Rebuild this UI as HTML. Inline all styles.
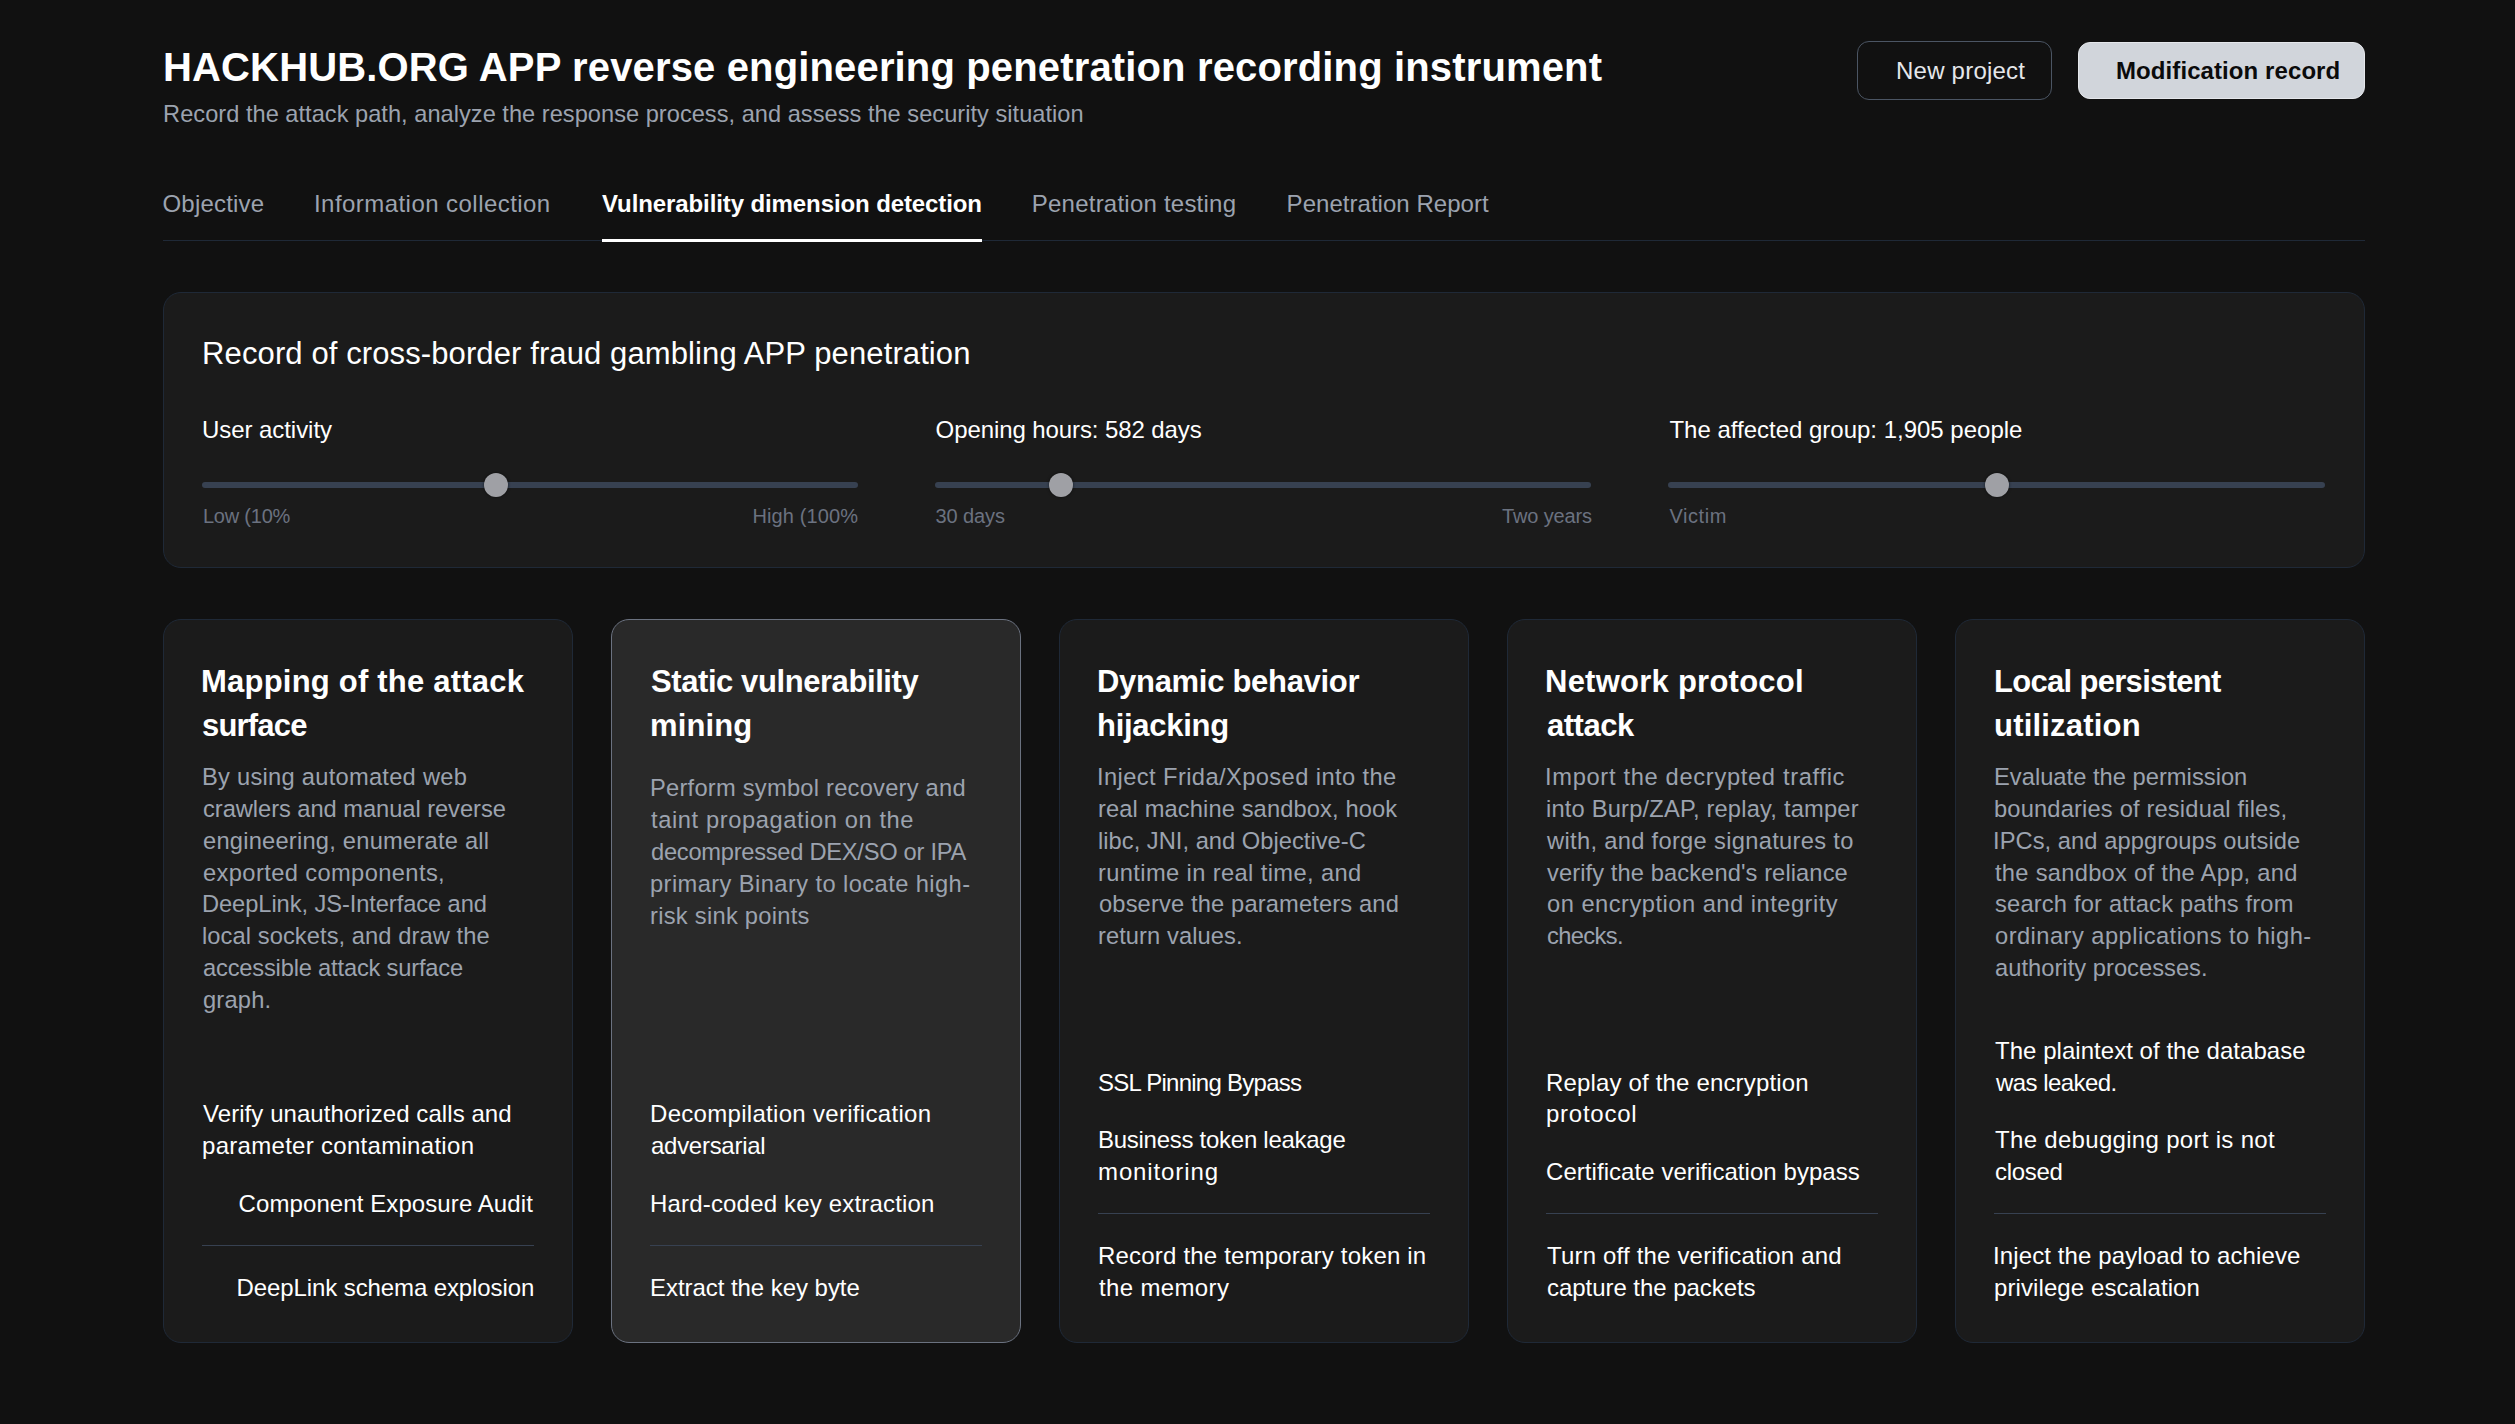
<!DOCTYPE html>
<html><head><meta charset="utf-8"><title>HACKHUB.ORG APP reverse engineering penetration recording instrument</title>
<style>
html,body{margin:0;padding:0;}
body{width:2515px;height:1424px;background:#111111;position:relative;overflow:hidden;font-family:"Liberation Sans",sans-serif;}
.t{position:absolute;white-space:pre;}
.b{position:absolute;}
</style></head><body>
<div class="b" style="left:1857px;top:41px;width:195px;height:59px;border:1px solid #4b5563;border-radius:12px;box-sizing:border-box;"></div>
<div class="b" style="left:2078px;top:42px;width:287px;height:57px;background:#d1d5db;border:1px solid #e5e7eb;border-radius:12px;box-sizing:border-box;"></div>
<div class="b" style="left:163px;top:240px;width:2202px;height:1px;background:#1f2937;"></div>
<div class="b" style="left:602px;top:239px;width:380px;height:3px;background:#fff;"></div>
<div class="b" style="left:163px;top:292px;width:2202px;height:276px;background:#1b1b1b;border:1px solid #1f2937;border-radius:18px;box-sizing:border-box;"></div>
<div class="b" style="left:202px;top:482px;width:656px;height:6px;background:#374151;border-radius:3px;"></div>
<div class="b" style="left:483.9px;top:473px;width:24px;height:24px;border-radius:50%;background:#9fa0a5;box-shadow:0 0 3px rgba(0,0,0,.6);"></div>
<div class="b" style="left:935px;top:482px;width:656px;height:6px;background:#374151;border-radius:3px;"></div>
<div class="b" style="left:1048.9px;top:473px;width:24px;height:24px;border-radius:50%;background:#9fa0a5;box-shadow:0 0 3px rgba(0,0,0,.6);"></div>
<div class="b" style="left:1668px;top:482px;width:657px;height:6px;background:#374151;border-radius:3px;"></div>
<div class="b" style="left:1985.0px;top:473px;width:24px;height:24px;border-radius:50%;background:#9fa0a5;box-shadow:0 0 3px rgba(0,0,0,.6);"></div>
<div class="b" style="left:163px;top:619px;width:410px;height:724px;background:#1b1b1b;border:1px solid #1f2937;border-radius:18px;box-sizing:border-box;"></div>
<div class="b" style="left:202px;top:1245px;width:332px;height:1px;background:#374151;"></div>
<div class="b" style="left:611px;top:619px;width:410px;height:724px;background:#292929;border:1px solid #6b7280;border-radius:18px;box-sizing:border-box;"></div>
<div class="b" style="left:650px;top:1245px;width:332px;height:1px;background:#374151;"></div>
<div class="b" style="left:1059px;top:619px;width:410px;height:724px;background:#1b1b1b;border:1px solid #1f2937;border-radius:18px;box-sizing:border-box;"></div>
<div class="b" style="left:1098px;top:1213px;width:332px;height:1px;background:#374151;"></div>
<div class="b" style="left:1507px;top:619px;width:410px;height:724px;background:#1b1b1b;border:1px solid #1f2937;border-radius:18px;box-sizing:border-box;"></div>
<div class="b" style="left:1546px;top:1213px;width:332px;height:1px;background:#374151;"></div>
<div class="b" style="left:1955px;top:619px;width:410px;height:724px;background:#1b1b1b;border:1px solid #1f2937;border-radius:18px;box-sizing:border-box;"></div>
<div class="b" style="left:1994px;top:1213px;width:332px;height:1px;background:#374151;"></div>
<div class="t" style="left:163.00px;top:42.34px;font-size:40px;line-height:50px;letter-spacing:0.147px;color:#ffffff;font-weight:700;">HACKHUB.ORG APP reverse engineering penetration recording instrument</div>
<div class="t" style="left:163.10px;top:98.72px;font-size:23.6px;line-height:30px;letter-spacing:0.028px;color:#9ca3af;">Record the attack path, analyze the response process, and assess the security situation</div>
<div class="t" style="left:1896.00px;top:56.08px;font-size:24px;line-height:30px;letter-spacing:0.228px;color:#e5e7eb;">New project</div>
<div class="t" style="left:2116.00px;top:56.08px;font-size:24px;line-height:30px;letter-spacing:0.085px;color:#0b0b0b;font-weight:700;">Modification record</div>
<div class="t" style="left:162.50px;top:188.98px;font-size:24px;line-height:30px;letter-spacing:0.196px;color:#9ca3af;">Objective</div>
<div class="t" style="left:314.00px;top:188.98px;font-size:24px;line-height:30px;letter-spacing:0.449px;color:#9ca3af;">Information collection</div>
<div class="t" style="left:602.10px;top:188.98px;font-size:24px;line-height:30px;letter-spacing:-0.102px;color:#ffffff;font-weight:700;">Vulnerability dimension detection</div>
<div class="t" style="left:1031.80px;top:188.98px;font-size:24px;line-height:30px;letter-spacing:0.226px;color:#9ca3af;">Penetration testing</div>
<div class="t" style="left:1286.60px;top:188.98px;font-size:24px;line-height:30px;letter-spacing:0.032px;color:#9ca3af;">Penetration Report</div>
<div class="t" style="left:202.10px;top:333.86px;font-size:31px;line-height:39px;letter-spacing:0.107px;color:#ffffff;">Record of cross-border fraud gambling APP penetration</div>
<div class="t" style="left:201.90px;top:415.48px;font-size:24px;line-height:30px;letter-spacing:-0.048px;color:#ffffff;">User activity</div>
<div class="t" style="left:935.60px;top:415.48px;font-size:24px;line-height:30px;letter-spacing:-0.094px;color:#ffffff;">Opening hours: 582 days</div>
<div class="t" style="left:1669.40px;top:415.48px;font-size:24px;line-height:30px;letter-spacing:-0.005px;color:#ffffff;">The affected group: 1,905 people</div>
<div class="t" style="left:202.90px;top:504.37px;font-size:20px;line-height:25px;letter-spacing:-0.206px;color:#6b7280;">Low (10%</div>
<div class="t" style="left:752.40px;top:504.37px;font-size:20px;line-height:25px;letter-spacing:0.122px;color:#6b7280;">High (100%</div>
<div class="t" style="left:935.60px;top:504.37px;font-size:20px;line-height:25px;letter-spacing:-0.107px;color:#6b7280;">30 days</div>
<div class="t" style="left:1502.10px;top:504.37px;font-size:20px;line-height:25px;letter-spacing:-0.167px;color:#6b7280;">Two years</div>
<div class="t" style="left:1669.40px;top:504.37px;font-size:20px;line-height:25px;letter-spacing:0.564px;color:#6b7280;">Victim</div>
<div class="t" style="left:201.00px;top:662.26px;font-size:31px;line-height:39px;letter-spacing:0.216px;color:#ffffff;font-weight:700;">Mapping of the attack</div>
<div class="t" style="left:202.00px;top:706.26px;font-size:31px;line-height:39px;letter-spacing:-0.800px;color:#ffffff;font-weight:700;">surface</div>
<div class="t" style="left:202.00px;top:761.99px;font-size:23.7px;line-height:30px;letter-spacing:0.260px;color:#9ca3af;">By using automated web</div>
<div class="t" style="left:203.00px;top:793.85px;font-size:23.7px;line-height:30px;letter-spacing:-0.049px;color:#9ca3af;">crawlers and manual reverse</div>
<div class="t" style="left:203.00px;top:825.71px;font-size:23.7px;line-height:30px;letter-spacing:0.223px;color:#9ca3af;">engineering, enumerate all</div>
<div class="t" style="left:203.00px;top:857.57px;font-size:23.7px;line-height:30px;letter-spacing:0.384px;color:#9ca3af;">exported components,</div>
<div class="t" style="left:202.00px;top:889.43px;font-size:23.7px;line-height:30px;letter-spacing:-0.084px;color:#9ca3af;">DeepLink, JS-Interface and</div>
<div class="t" style="left:202.00px;top:921.29px;font-size:23.7px;line-height:30px;letter-spacing:0.074px;color:#9ca3af;">local sockets, and draw the</div>
<div class="t" style="left:203.00px;top:953.15px;font-size:23.7px;line-height:30px;letter-spacing:-0.187px;color:#9ca3af;">accessible attack surface</div>
<div class="t" style="left:203.00px;top:985.01px;font-size:23.7px;line-height:30px;letter-spacing:0.182px;color:#9ca3af;">graph.</div>
<div class="t" style="left:236.60px;top:1273.18px;font-size:24px;line-height:30px;letter-spacing:-0.103px;color:#ffffff;">DeepLink schema explosion</div>
<div class="t" style="left:203.00px;top:1099.18px;font-size:24px;line-height:30px;letter-spacing:0.062px;color:#ffffff;">Verify unauthorized calls and</div>
<div class="t" style="left:202.00px;top:1131.18px;font-size:24px;line-height:30px;letter-spacing:0.296px;color:#ffffff;">parameter contamination</div>
<div class="t" style="left:238.60px;top:1189.18px;font-size:24px;line-height:30px;letter-spacing:0.088px;color:#ffffff;">Component Exposure Audit</div>
<div class="t" style="left:651.00px;top:662.26px;font-size:31px;line-height:39px;letter-spacing:-0.419px;color:#ffffff;font-weight:700;">Static vulnerability</div>
<div class="t" style="left:650.00px;top:706.26px;font-size:31px;line-height:39px;letter-spacing:0.123px;color:#ffffff;font-weight:700;">mining</div>
<div class="t" style="left:650.00px;top:773.19px;font-size:23.7px;line-height:30px;letter-spacing:0.241px;color:#9ca3af;">Perform symbol recovery and</div>
<div class="t" style="left:651.00px;top:805.05px;font-size:23.7px;line-height:30px;letter-spacing:0.590px;color:#9ca3af;">taint propagation on the</div>
<div class="t" style="left:651.00px;top:836.91px;font-size:23.7px;line-height:30px;letter-spacing:-0.271px;color:#9ca3af;">decompressed DEX/SO or IPA</div>
<div class="t" style="left:650.00px;top:868.77px;font-size:23.7px;line-height:30px;letter-spacing:0.413px;color:#9ca3af;">primary Binary to locate high-</div>
<div class="t" style="left:650.00px;top:900.63px;font-size:23.7px;line-height:30px;letter-spacing:0.272px;color:#9ca3af;">risk sink points</div>
<div class="t" style="left:650.00px;top:1273.18px;font-size:24px;line-height:30px;letter-spacing:-0.051px;color:#ffffff;">Extract the key byte</div>
<div class="t" style="left:650.00px;top:1099.18px;font-size:24px;line-height:30px;letter-spacing:0.302px;color:#ffffff;">Decompilation verification</div>
<div class="t" style="left:651.00px;top:1131.18px;font-size:24px;line-height:30px;letter-spacing:-0.278px;color:#ffffff;">adversarial</div>
<div class="t" style="left:650.00px;top:1189.18px;font-size:24px;line-height:30px;letter-spacing:0.178px;color:#ffffff;">Hard-coded key extraction</div>
<div class="t" style="left:1097.00px;top:662.26px;font-size:31px;line-height:39px;letter-spacing:-0.302px;color:#ffffff;font-weight:700;">Dynamic behavior</div>
<div class="t" style="left:1097.00px;top:706.26px;font-size:31px;line-height:39px;letter-spacing:-0.269px;color:#ffffff;font-weight:700;">hijacking</div>
<div class="t" style="left:1097.00px;top:761.99px;font-size:23.7px;line-height:30px;letter-spacing:0.403px;color:#9ca3af;">Inject Frida/Xposed into the</div>
<div class="t" style="left:1098.00px;top:793.85px;font-size:23.7px;line-height:30px;letter-spacing:0.113px;color:#9ca3af;">real machine sandbox, hook</div>
<div class="t" style="left:1098.00px;top:825.71px;font-size:23.7px;line-height:30px;letter-spacing:0.021px;color:#9ca3af;">libc, JNI, and Objective-C</div>
<div class="t" style="left:1098.00px;top:857.57px;font-size:23.7px;line-height:30px;letter-spacing:0.378px;color:#9ca3af;">runtime in real time, and</div>
<div class="t" style="left:1099.00px;top:889.43px;font-size:23.7px;line-height:30px;letter-spacing:0.143px;color:#9ca3af;">observe the parameters and</div>
<div class="t" style="left:1098.00px;top:921.29px;font-size:23.7px;line-height:30px;letter-spacing:0.077px;color:#9ca3af;">return values.</div>
<div class="t" style="left:1098.00px;top:1241.18px;font-size:24px;line-height:30px;letter-spacing:0.192px;color:#ffffff;">Record the temporary token in</div>
<div class="t" style="left:1099.00px;top:1273.18px;font-size:24px;line-height:30px;letter-spacing:0.356px;color:#ffffff;">the memory</div>
<div class="t" style="left:1098.00px;top:1068.18px;font-size:24px;line-height:30px;letter-spacing:-0.740px;color:#ffffff;">SSL Pinning Bypass</div>
<div class="t" style="left:1098.00px;top:1125.18px;font-size:24px;line-height:30px;letter-spacing:-0.272px;color:#ffffff;">Business token leakage</div>
<div class="t" style="left:1098.00px;top:1157.18px;font-size:24px;line-height:30px;letter-spacing:0.883px;color:#ffffff;">monitoring</div>
<div class="t" style="left:1545.00px;top:662.26px;font-size:31px;line-height:39px;letter-spacing:0.246px;color:#ffffff;font-weight:700;">Network protocol</div>
<div class="t" style="left:1547.00px;top:706.26px;font-size:31px;line-height:39px;letter-spacing:-0.477px;color:#ffffff;font-weight:700;">attack</div>
<div class="t" style="left:1545.00px;top:761.99px;font-size:23.7px;line-height:30px;letter-spacing:0.672px;color:#9ca3af;">Import the decrypted traffic</div>
<div class="t" style="left:1546.00px;top:793.85px;font-size:23.7px;line-height:30px;letter-spacing:0.191px;color:#9ca3af;">into Burp/ZAP, replay, tamper</div>
<div class="t" style="left:1547.05px;top:825.71px;font-size:23.7px;line-height:30px;letter-spacing:0.311px;color:#9ca3af;">with, and forge signatures to</div>
<div class="t" style="left:1547.00px;top:857.57px;font-size:23.7px;line-height:30px;letter-spacing:0.093px;color:#9ca3af;">verify the backend's reliance</div>
<div class="t" style="left:1547.00px;top:889.43px;font-size:23.7px;line-height:30px;letter-spacing:0.492px;color:#9ca3af;">on encryption and integrity</div>
<div class="t" style="left:1547.00px;top:921.29px;font-size:23.7px;line-height:30px;letter-spacing:-0.624px;color:#9ca3af;">checks.</div>
<div class="t" style="left:1547.00px;top:1241.18px;font-size:24px;line-height:30px;letter-spacing:0.182px;color:#ffffff;">Turn off the verification and</div>
<div class="t" style="left:1547.00px;top:1273.18px;font-size:24px;line-height:30px;letter-spacing:-0.048px;color:#ffffff;">capture the packets</div>
<div class="t" style="left:1546.00px;top:1068.18px;font-size:24px;line-height:30px;letter-spacing:0.165px;color:#ffffff;">Replay of the encryption</div>
<div class="t" style="left:1546.00px;top:1099.18px;font-size:24px;line-height:30px;letter-spacing:0.744px;color:#ffffff;">protocol</div>
<div class="t" style="left:1546.00px;top:1157.18px;font-size:24px;line-height:30px;letter-spacing:0.056px;color:#ffffff;">Certificate verification bypass</div>
<div class="t" style="left:1994.00px;top:662.26px;font-size:31px;line-height:39px;letter-spacing:-0.689px;color:#ffffff;font-weight:700;">Local persistent</div>
<div class="t" style="left:1994.00px;top:706.26px;font-size:31px;line-height:39px;letter-spacing:0.195px;color:#ffffff;font-weight:700;">utilization</div>
<div class="t" style="left:1994.00px;top:761.99px;font-size:23.7px;line-height:30px;letter-spacing:0.022px;color:#9ca3af;">Evaluate the permission</div>
<div class="t" style="left:1994.00px;top:793.85px;font-size:23.7px;line-height:30px;letter-spacing:0.167px;color:#9ca3af;">boundaries of residual files,</div>
<div class="t" style="left:1993.00px;top:825.71px;font-size:23.7px;line-height:30px;letter-spacing:0.062px;color:#9ca3af;">IPCs, and appgroups outside</div>
<div class="t" style="left:1995.00px;top:857.57px;font-size:23.7px;line-height:30px;letter-spacing:0.285px;color:#9ca3af;">the sandbox of the App, and</div>
<div class="t" style="left:1995.00px;top:889.43px;font-size:23.7px;line-height:30px;letter-spacing:0.180px;color:#9ca3af;">search for attack paths from</div>
<div class="t" style="left:1995.00px;top:921.29px;font-size:23.7px;line-height:30px;letter-spacing:0.462px;color:#9ca3af;">ordinary applications to high-</div>
<div class="t" style="left:1995.00px;top:953.15px;font-size:23.7px;line-height:30px;letter-spacing:0.032px;color:#9ca3af;">authority processes.</div>
<div class="t" style="left:1993.00px;top:1241.18px;font-size:24px;line-height:30px;letter-spacing:0.114px;color:#ffffff;">Inject the payload to achieve</div>
<div class="t" style="left:1994.00px;top:1273.18px;font-size:24px;line-height:30px;letter-spacing:0.094px;color:#ffffff;">privilege escalation</div>
<div class="t" style="left:1995.00px;top:1036.18px;font-size:24px;line-height:30px;letter-spacing:0.037px;color:#ffffff;">The plaintext of the database</div>
<div class="t" style="left:1996.05px;top:1068.18px;font-size:24px;line-height:30px;letter-spacing:-0.559px;color:#ffffff;">was leaked.</div>
<div class="t" style="left:1995.00px;top:1125.18px;font-size:24px;line-height:30px;letter-spacing:0.309px;color:#ffffff;">The debugging port is not</div>
<div class="t" style="left:1995.00px;top:1157.18px;font-size:24px;line-height:30px;letter-spacing:-0.317px;color:#ffffff;">closed</div>
</body></html>
